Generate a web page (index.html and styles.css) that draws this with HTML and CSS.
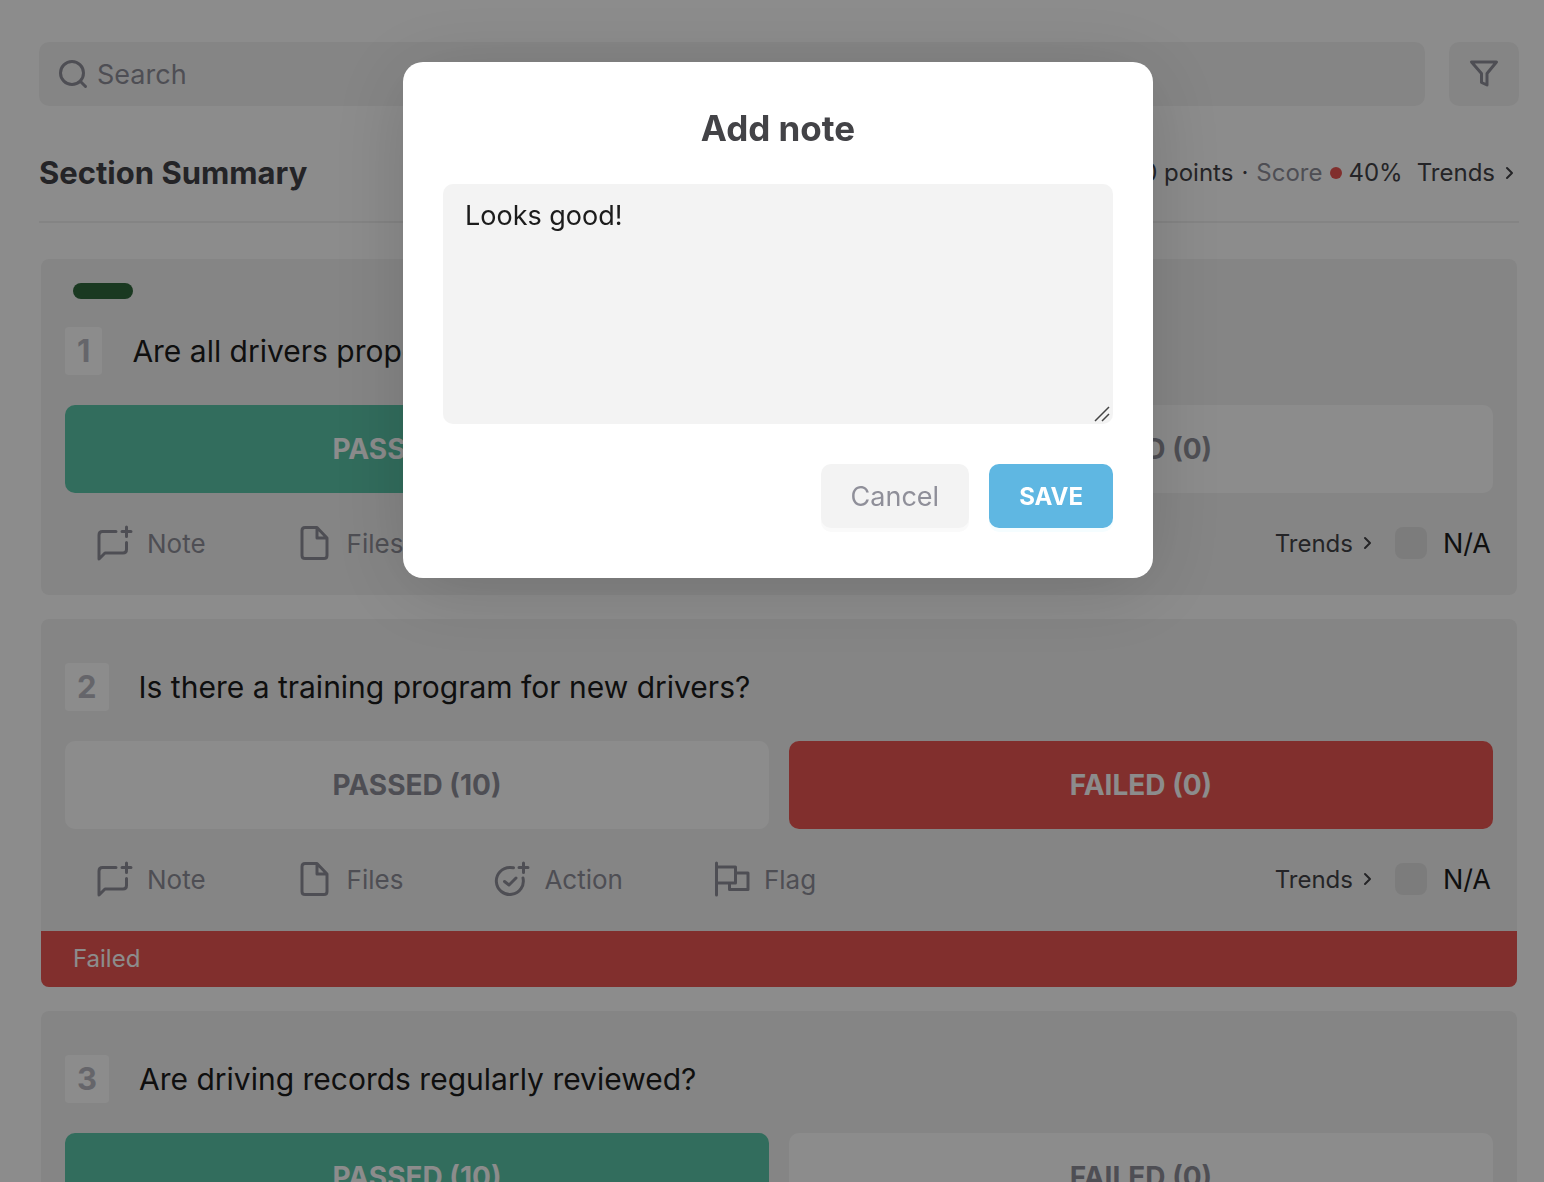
FILE: index.html
```html
<!DOCTYPE html>
<html lang="en">
<head>
  <meta charset="utf-8">
  <title>Section Summary</title>
  <link rel="stylesheet" href="styles.css">
</head>
<body>
  <!-- Icons -->
  <svg class="sprite" aria-hidden="true">
    <symbol id="icon-note" viewBox="0 0 40 40">
      <path d="M21 8.500H7.500Q4 8.500 4 12V36L10 30H28Q31.500 30 31.500 26.500V19.500M31.500 4V13.500M27 8.500H36"/>
    </symbol>
    <symbol id="icon-file" viewBox="0 0 40 40">
      <path d="M22 4.500H10Q7 4.500 7 7.500V32.500Q7 35.500 10 35.500H29Q32 35.500 32 32.500V15ZM22 4.500V15H32"/>
    </symbol>
    <symbol id="icon-action" viewBox="0 0 40 40">
      <path d="M21.500 8.800Q20 8.500 18 8.500A13.500 13.500 0 1 0 31 19M12.500 22.500L17 26L24 19M31.500 4V13.500M27 8.500H36"/>
    </symbol>
    <symbol id="icon-flag" viewBox="0 0 40 40">
      <path d="M4.500 4V36M4.500 8H23.500V24H4.500M23.500 14H36V30.500H17.500V24"/>
    </symbol>
    <symbol id="icon-chevron" viewBox="0 0 10 14">
      <path d="M2 2L7 7L2 12"/>
    </symbol>
  </svg>

  <main class="page">
    <div class="search-row">
      <label class="search">
        <svg class="search-icon" viewBox="0 0 30 30" aria-hidden="true"><circle cx="13" cy="14" r="11.500"/><path d="M21.500 22.500L26.500 27.500"/></svg>
        <input type="search" placeholder="Search" aria-label="Search">
      </label>
      <button type="button" class="filter" aria-label="Filter">
        <svg viewBox="0 0 30 30" aria-hidden="true"><path d="M2.500 4H27.500L18 15.500V27L12.500 24.500V15.500Z"/></svg>
      </button>
    </div>

    <header class="summary">
      <h1>Section Summary</h1>
      <div class="summary-info">
        <span>20 / 50 points</span>
        <span>·</span>
        <span class="muted">Score</span>
        <span class="score">40%</span>
        <a href="#" class="trends">Trends <svg class="chevron" aria-hidden="true"><use href="#icon-chevron"/></svg></a>
      </div>
    </header>

    <!-- Question 1 -->
    <section class="card">
      <div class="tag"></div>
      <div class="question">
        <span class="number">1</span>
        <h2>Are all drivers properly licensed?</h2>
      </div>
      <div class="answers">
        <button type="button" class="answer passed">PASSED (10)</button>
        <button type="button" class="answer">FAILED (0)</button>
      </div>
      <div class="toolbar">
        <button type="button" class="tool"><svg aria-hidden="true"><use href="#icon-note"/></svg>Note</button>
        <button type="button" class="tool"><svg aria-hidden="true"><use href="#icon-file"/></svg>Files</button>
        <button type="button" class="tool"><svg aria-hidden="true"><use href="#icon-action"/></svg>Action</button>
        <button type="button" class="tool"><svg aria-hidden="true"><use href="#icon-flag"/></svg>Flag</button>
        <a href="#" class="trends">Trends <svg class="chevron" aria-hidden="true"><use href="#icon-chevron"/></svg></a>
        <label class="na"><input type="checkbox">N/A</label>
      </div>
    </section>

    <!-- Question 2 -->
    <section class="card">
      <div class="question">
        <span class="number">2</span>
        <h2>Is there a training program for new drivers?</h2>
      </div>
      <div class="answers">
        <button type="button" class="answer">PASSED (10)</button>
        <button type="button" class="answer failed">FAILED (0)</button>
      </div>
      <div class="toolbar">
        <button type="button" class="tool"><svg aria-hidden="true"><use href="#icon-note"/></svg>Note</button>
        <button type="button" class="tool"><svg aria-hidden="true"><use href="#icon-file"/></svg>Files</button>
        <button type="button" class="tool"><svg aria-hidden="true"><use href="#icon-action"/></svg>Action</button>
        <button type="button" class="tool"><svg aria-hidden="true"><use href="#icon-flag"/></svg>Flag</button>
        <a href="#" class="trends">Trends <svg class="chevron" aria-hidden="true"><use href="#icon-chevron"/></svg></a>
        <label class="na"><input type="checkbox">N/A</label>
      </div>
      <p class="status">Failed</p>
    </section>

    <!-- Question 3 -->
    <section class="card">
      <div class="question">
        <span class="number">3</span>
        <h2>Are driving records regularly reviewed?</h2>
      </div>
      <div class="answers">
        <button type="button" class="answer passed">PASSED (10)</button>
        <button type="button" class="answer">FAILED (0)</button>
      </div>
    </section>
  </main>

  <!-- Add note dialog -->
  <div class="overlay">
    <form class="modal" role="dialog" aria-labelledby="note-title">
      <h2 id="note-title">Add note</h2>
      <textarea aria-labelledby="note-title">Looks good!</textarea>
      <div class="modal-actions">
        <button type="button" class="btn btn-cancel">Cancel</button>
        <button type="button" class="btn btn-save">SAVE</button>
      </div>
    </form>
  </div>
</body>
</html>
```
FILE: styles.css
```css
* {
  box-sizing: border-box;
}

body {
  margin: 0;
  height: 100vh;
  overflow: hidden;
  font-family: Inter, "Liberation Sans", sans-serif;
  color: #1c1c1c;
  background-color: #fff;
}

h1, h2, p {
  margin: 0;
}

button, input, textarea {
  font-family: inherit;
  border: none;
}

a {
  color: inherit;
  text-decoration: none;
}

svg {
  flex: none;
  fill: none;
  stroke: currentColor;
  stroke-width: 3px;
  stroke-linecap: round;
  stroke-linejoin: round;
}

.sprite {
  display: none;
}

.page {
  padding: 42px 25px 24px 39px;
}

/* Search */
.search-row {
  display: flex;
  gap: 24px;
  height: 64px;
}

.search {
  flex: 1;
  display: flex;
  align-items: center;
  gap: 8px;
  padding: 0 20px;
  border-radius: 10px;
  color: #8f8f99;
  background-color: #f3f3f3;
}

.search-icon {
  width: 30px;
  height: 30px;
}

.search input {
  flex: 1;
  padding: 0;
  font-size: 27px;
  background: none;
}

.search input::placeholder {
  color: #8f8f99;
}

.filter {
  width: 70px;
  padding: 0;
  border-radius: 10px;
  color: #8f8f99;
  background-color: #f3f3f3;
}

.filter svg {
  width: 30px;
  height: 30px;
}

/* Section header */
.summary {
  display: flex;
  align-items: center;
  justify-content: space-between;
  margin-bottom: 36px;
  padding: 46px 0 28px;
  border-bottom: 2px solid #f0f0f0;
  color: #434347;
}

.summary h1 {
  font-size: 31px;
  line-height: 41px;
  font-weight: 700;
}

.summary-info {
  display: flex;
  align-items: center;
  gap: 8px;
  font-size: 24px;
}

.muted {
  color: #8f8f99;
}

.score {
  display: flex;
  align-items: center;
  gap: 6px;
}

.score::before {
  content: "";
  width: 12px;
  height: 12px;
  border-radius: 50%;
  background-color: #ec5752;
}

.trends {
  display: flex;
  align-items: center;
  gap: 10px;
  margin-left: auto;
  font-size: 24px;
  color: #434347;
}

.summary .trends {
  margin: 0 4px 0 6px;
}

.chevron {
  width: 10px;
  height: 14px;
  stroke-width: 2px;
}

/* Question cards */
.card {
  margin: 0 2px 24px;
  padding-top: 24px;
  border-radius: 8px;
  overflow: hidden;
  background-color: #f3f3f3;
}

.tag {
  width: 60px;
  height: 16px;
  margin: 0 0 8px 32px;
  border-radius: 8px;
  background-color: #31683c;
}

.question {
  display: flex;
  align-items: center;
  gap: 30px;
  padding: 20px 24px 30px;
}

.number {
  padding: 0 12px;
  border-radius: 4px;
  font-size: 31px;
  line-height: 48px;
  font-weight: 700;
  color: #b9b9c2;
  background-color: #fff;
}

.question h2 {
  font-size: 30px;
  line-height: 48px;
  font-weight: 400;
}

.answers {
  display: grid;
  grid-template-columns: 1fr 1fr;
  gap: 20px;
  padding: 0 24px;
}

.answer {
  height: 88px;
  border-radius: 10px;
  font-size: 28px;
  font-weight: 700;
  color: #8f8f99;
  background-color: #fff;
}

.answer.passed {
  color: #fff;
  background-color: #5bc6a9;
}

.answer.failed {
  color: #fff;
  background-color: #ec5752;
}

.toolbar {
  display: flex;
  align-items: center;
  padding: 30px 26px 32px 54px;
}

.tool {
  display: flex;
  align-items: center;
  gap: 12px;
  margin-right: 89px;
  padding: 0;
  font-size: 26px;
  color: #8f8f99;
  background: none;
}

.tool svg {
  width: 40px;
  height: 40px;
}

.na {
  display: flex;
  align-items: center;
  gap: 16px;
  margin-left: 22px;
  font-size: 27px;
}

.na input {
  appearance: none;
  width: 32px;
  height: 32px;
  margin: 0;
  border-radius: 8px;
  background-color: #e2e2e2;
}

.status {
  padding: 0 32px;
  font-size: 24px;
  line-height: 56px;
  color: #fff;
  background-color: #ec5752;
}

/* Dialog */
.overlay {
  position: fixed;
  inset: 0;
  display: flex;
  align-items: flex-start;
  justify-content: center;
  padding: 62px 0 0 12px;
  background-color: rgba(0, 0, 0, 0.45);
}

.modal {
  width: 750px;
  padding: 40px 40px 50px;
  border-radius: 20px;
  background-color: #fff;
  box-shadow: 0 10px 80px rgba(0, 0, 0, 0.16);
}

.modal h2 {
  margin-bottom: 30px;
  font-size: 35px;
  line-height: 52px;
  font-weight: 700;
  text-align: center;
  color: #434347;
}

.modal textarea {
  display: block;
  width: 100%;
  height: 240px;
  padding: 14px 22px;
  border-radius: 10px;
  font-size: 27px;
  line-height: 36px;
  color: #1c1c1c;
  background: #f3f3f3 url("data:image/svg+xml,%3Csvg xmlns='http://www.w3.org/2000/svg' width='16' height='16' fill='none' stroke='%23444' stroke-width='1.500'%3E%3Cpath d='M1 15L15 1M8 15L15 8'/%3E%3C/svg%3E") no-repeat right 3px bottom 2px;
  resize: vertical;
}

.modal textarea::-webkit-resizer {
  background: transparent;
}

.modal-actions {
  display: flex;
  justify-content: flex-end;
  gap: 20px;
  margin-top: 40px;
}

.btn {
  height: 64px;
  padding: 0 30px;
  border-radius: 10px;
}

.btn-cancel {
  font-size: 27px;
  color: #8f8f99;
  background-color: #f3f3f3;
  box-shadow: 0 4px 0 #fafafa;
}

.btn-save {
  font-size: 24px;
  font-weight: 700;
  color: #fff;
  background-color: #5fb7e2;
  box-shadow: 0 4px 0 #f5fdff;
}
```
